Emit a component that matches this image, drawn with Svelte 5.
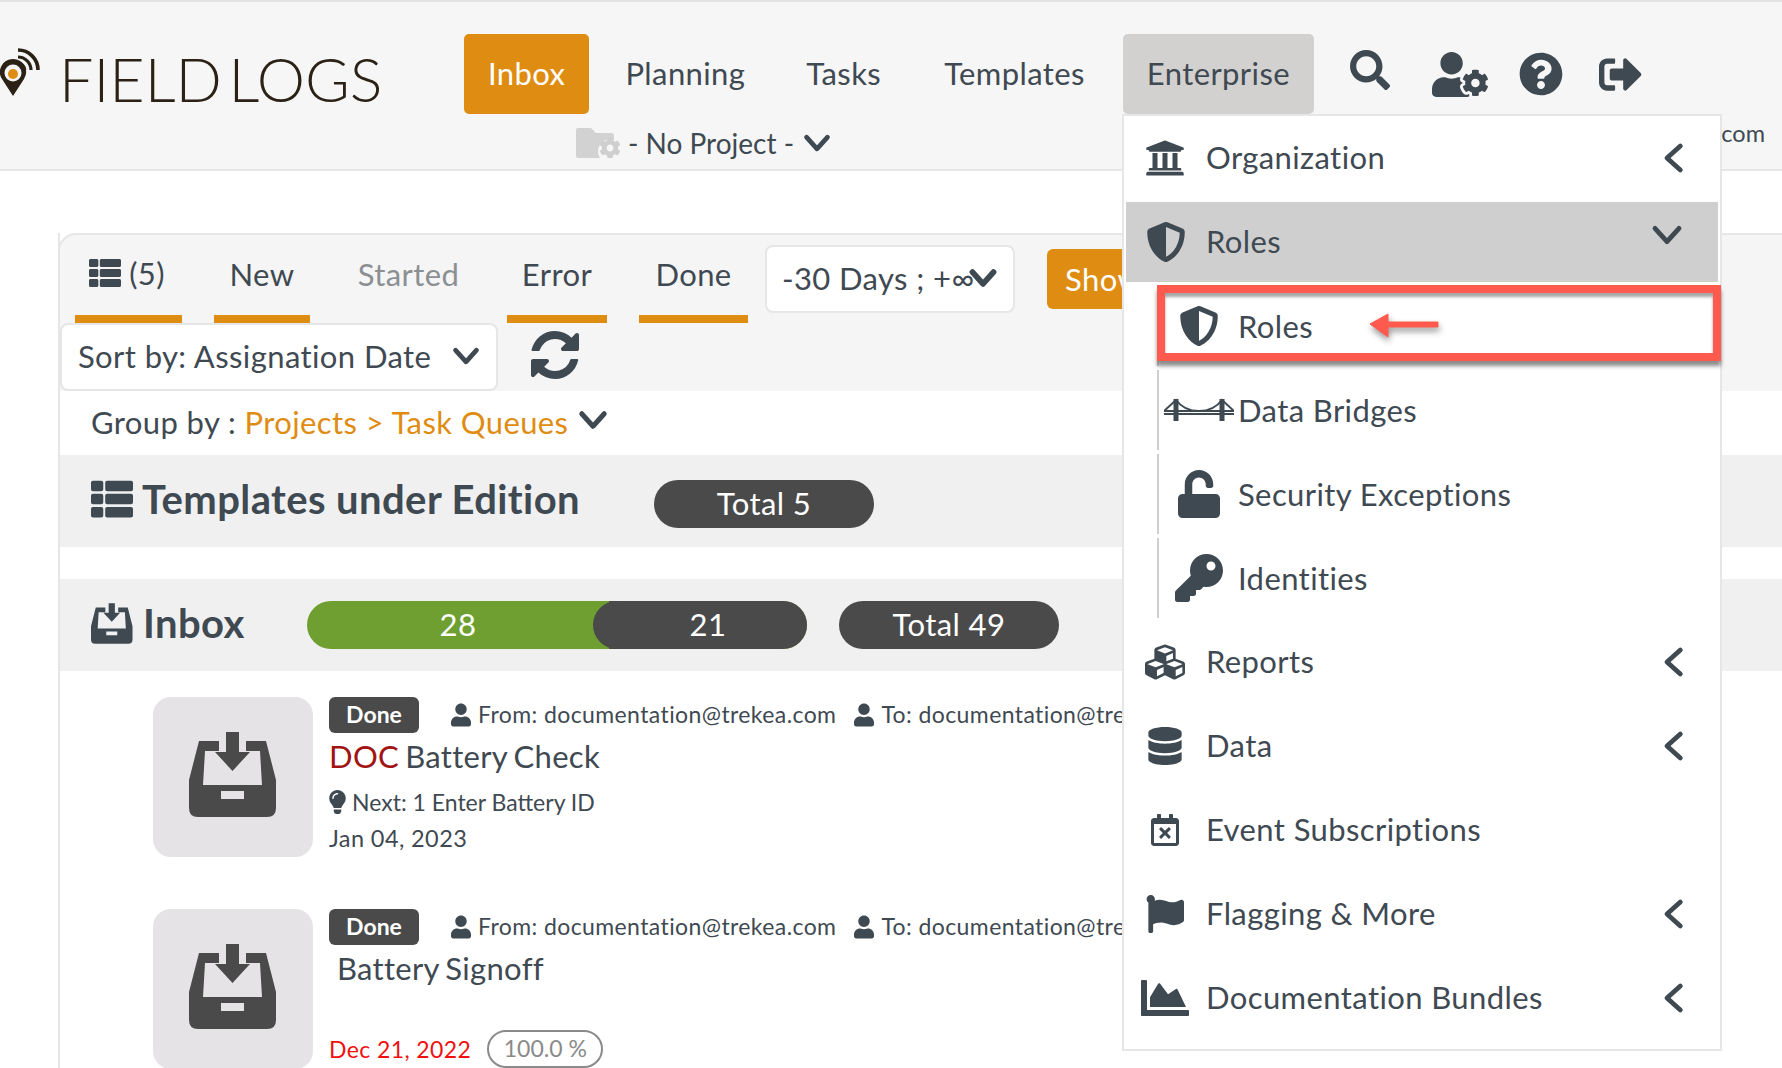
<script>
  const icons = {
    search: ['0 0 512 512', 'M505 442.7L405.3 343c-4.5-4.5-10.6-7-17-7H372c27.6-35.3 44-79.7 44-128C416 93.1 322.9 0 208 0S0 93.1 0 208s93.1 208 208 208c48.3 0 92.7-16.4 128-44v16.3c0 6.4 2.5 12.5 7 17l99.7 99.7c9.4 9.4 24.6 9.4 33.9 0l28.3-28.3c9.4-9.4 9.4-24.6.1-34zM208 336c-70.7 0-128-57.2-128-128 0-70.7 57.2-128 128-128 70.7 0 128 57.2 128 128 0 70.7-57.2 128-128 128z'],
    usercog: ['0 0 640 512', 'M610.5 373.3c2.6-14.1 2.6-28.5 0-42.6l25.8-14.9c3-1.7 4.3-5.2 3.3-8.5-6.7-21.6-18.2-41.2-33.2-57.4-2.3-2.5-6-3.1-9-1.4l-25.8 14.9c-10.9-9.3-23.4-16.5-36.9-21.3v-29.8c0-3.4-2.4-6.4-5.7-7.1-22.3-5-45-4.8-66.2 0-3.3.7-5.7 3.7-5.7 7.1v29.8c-13.5 4.8-26 12-36.9 21.3l-25.8-14.9c-2.9-1.7-6.7-1.1-9 1.4-15 16.2-26.5 35.8-33.2 57.4-1 3.3.4 6.8 3.3 8.5l25.8 14.9c-2.6 14.1-2.6 28.5 0 42.6l-25.8 14.9c-3 1.7-4.3 5.2-3.3 8.5 6.7 21.6 18.2 41.1 33.2 57.4 2.3 2.5 6 3.1 9 1.4l25.8-14.9c10.9 9.3 23.4 16.5 36.9 21.3v29.8c0 3.4 2.4 6.4 5.7 7.1 22.3 5 45 4.8 66.2 0 3.3-.7 5.7-3.7 5.7-7.1v-29.8c13.5-4.8 26-12 36.9-21.3l25.8 14.9c2.9 1.7 6.7 1.1 9-1.4 15-16.2 26.5-35.8 33.2-57.4 1-3.3-.4-6.8-3.3-8.5l-25.8-14.9zM496 400.5c-26.8 0-48.5-21.8-48.5-48.5s21.8-48.5 48.5-48.5 48.5 21.8 48.5 48.5-21.7 48.5-48.5 48.5zM224 256c70.7 0 128-57.3 128-128S294.7 0 224 0 96 57.3 96 128s57.3 128 128 128zm201.2 226.5c-2.3-1.2-4.6-2.6-6.8-3.9l-7.9 4.6c-6 3.4-12.8 5.3-19.6 5.3-10.9 0-21.4-4.6-28.9-12.6-18.3-19.8-32.3-43.9-40.2-69.6-5.5-17.7 1.9-36.4 17.9-45.7l7.9-4.6c-.1-2.6-.1-5.2 0-7.8l-7.9-4.6c-16-9.2-23.4-28-17.9-45.7.9-2.9 2.2-5.8 3.2-8.7-3.8-.3-7.5-1.2-11.4-1.2h-16.7c-22.2 10.2-46.9 16-72.9 16s-50.6-5.8-72.9-16h-16.7C60.2 288 0 348.2 0 422.4V464c0 26.5 21.5 48 48 48h352c10.1 0 19.5-3.2 27.2-8.5-1.2-3.8-2-7.7-2-11.8v-9.2z'],
    help: ['0 0 512 512', 'M504 256c0 136.997-111.043 248-248 248S8 392.997 8 256C8 119.083 119.043 8 256 8s248 111.083 248 248zM262.655 90c-54.497 0-89.255 22.957-116.549 63.758-3.536 5.286-2.353 12.415 2.715 16.258l34.699 26.31c5.205 3.947 12.621 3.008 16.665-2.122 17.864-22.658 30.113-35.797 57.303-35.797 20.429 0 45.698 13.148 45.698 32.958 0 14.976-12.363 22.667-32.534 33.976C247.128 238.528 216 254.941 216 296v4c0 6.627 5.373 12 12 12h56c6.627 0 12-5.373 12-12v-1.333c0-28.462 83.186-29.647 83.186-106.667 0-58.002-60.165-102-116.531-102zM256 338c-25.365 0-46 20.635-46 46 0 25.364 20.635 46 46 46s46-20.636 46-46c0-25.365-20.635-46-46-46z'],
    signout: ['0 0 512 512', 'M497 273L329 441c-15 15-41 4.5-41-17v-96H152c-13.3 0-24-10.7-24-24v-96c0-13.3 10.7-24 24-24h136V88c0-21.4 25.9-32 41-17l168 168c9.3 9.4 9.3 24.6 0 34zM192 436v-40c0-6.6-5.4-12-12-12H96c-17.7 0-32-14.3-32-32V160c0-17.7 14.3-32 32-32h84c6.6 0 12-5.4 12-12V76c0-6.6-5.4-12-12-12H96c-53 0-96 43-96 96v192c0 53 43 96 96 96h84c6.6 0 12-5.4 12-12z'],
    bank: ['0 0 512 512', 'M496 128v16a8 8 0 0 1-8 8h-24v12c0 6.627-5.373 12-12 12H60c-6.627 0-12-5.373-12-12v-12H24a8 8 0 0 1-8-8v-16a8 8 0 0 1 4.941-7.392l232-88a7.996 7.996 0 0 1 6.118 0l232 88A8 8 0 0 1 496 128zm-24 304H40c-13.255 0-24 10.745-24 24v16a8 8 0 0 0 8 8h464a8 8 0 0 0 8-8v-16c0-13.255-10.745-24-24-24zM96 192v192H60c-6.627 0-12 5.373-12 12v20h416v-20c0-6.627-5.373-12-12-12h-36V192h-64v192h-64V192h-64v192h-64V192H96z'],
    shield: ['0 0 512 512', 'M466.5 83.7l-192-80a48.15 48.15 0 0 0-36.9 0l-192 80C27.7 91.1 16 108.6 16 128c0 198.5 114.5 335.7 221.5 380.3 11.8 4.9 25.1 4.9 36.9 0C360.1 472.6 496 349.3 496 128c0-19.4-11.7-36.9-29.5-44.3zM256.1 446.3l-.1-381 175.9 73.3c-3.3 151.4-82.1 261.1-175.8 307.7z'],
    cubes: ['0 0 512 512', 'M488.6 250.2L392 214V105.5c0-15-9.3-28.4-23.4-33.7l-100-37.5c-8.1-3.1-17.1-3.1-25.3 0l-100 37.5c-14.1 5.3-23.4 18.7-23.4 33.7V214l-96.6 36.2C9.3 255.5 0 268.9 0 283.9V394c0 13.6 7.7 26.1 19.9 32.2l100 50c10.1 5.1 22.1 5.1 32.2 0l103.9-52 103.9 52c10.1 5.1 22.1 5.1 32.2 0l100-50c12.2-6.1 19.9-18.6 19.9-32.2V283.9c0-15-9.3-28.4-23.4-33.7zM358 214.8l-85 31.9v-68.2l85-37v73.3zM154 104.1l102-38.2 102 38.2v.6l-102 41.4-102-41.4v-.6zm84 291.1l-85 42.5v-79.1l85-38.8v75.4zm0-112l-102 41.4-102-41.4v-.6l102-38.2 102 38.2v.6zm240 112l-85 42.5v-79.1l85-38.8v75.4zm0-112l-102 41.4-102-41.4v-.6l102-38.2 102 38.2v.6z'],
    database: ['0 0 448 512', 'M448 73.143v45.714C448 159.143 347.667 192 224 192S0 159.143 0 118.857V73.143C0 32.857 100.333 0 224 0s224 32.857 224 73.143zM448 176v102.857C448 319.143 347.667 352 224 352S0 319.143 0 278.857V176c48.125 33.143 136.208 48.572 224 48.572S399.874 209.143 448 176zm0 160v102.857C448 479.143 347.667 512 224 512S0 479.143 0 438.857V336c48.125 33.143 136.208 48.572 224 48.572S399.874 369.143 448 336z'],
    calendar: ['0 0 448 512', 'M311.7 374.7l-17 17c-4.7 4.7-12.3 4.7-17 0L224 337.9l-53.7 53.7c-4.7 4.7-12.3 4.7-17 0l-17-17c-4.7-4.7-4.7-12.3 0-17l53.7-53.7-53.7-53.7c-4.7-4.7-4.7-12.3 0-17l17-17c4.7-4.7 12.3-4.7 17 0l53.7 53.7 53.7-53.7c4.7-4.7 12.3-4.7 17 0l17 17c4.7 4.7 4.7 12.3 0 17L257.9 304l53.7 53.7c4.8 4.7 4.8 12.3.1 17zM448 112v352c0 26.5-21.5 48-48 48H48c-26.5 0-48-21.5-48-48V112c0-26.5 21.5-48 48-48h48V12c0-6.6 5.4-12 12-12h40c6.6 0 12 5.4 12 12v52h128V12c0-6.6 5.4-12 12-12h40c6.6 0 12 5.4 12 12v52h48c26.5 0 48 21.5 48 48zm-48 346V160H48v298c0 3.3 2.7 6 6 6h340c3.3 0 6-2.7 6-6z'],
    flag: ['0 0 512 512', 'M349.565 98.783C295.978 98.783 251.721 64 184.348 64c-24.955 0-47.309 4.384-68.045 12.013a55.947 55.947 0 0 0 3.586-23.562C118.117 24.015 94.806 1.206 66.338.048 34.345-1.254 8 24.296 8 56c0 19.026 9.497 35.825 24 45.945V488c0 13.255 10.745 24 24 24h16c13.255 0 24-10.745 24-24v-94.4c28.311-12.064 63.582-22.122 114.435-22.122 53.588 0 97.844 34.783 165.217 34.783 48.169 0 86.667-16.294 122.505-40.858C506.84 359.452 512 349.571 512 339.045v-243.1c0-23.393-24.269-38.87-45.485-29.016-34.338 15.948-76.454 31.854-116.95 31.854z'],
    chart: ['0 0 512 512', 'M500 384c6.6 0 12 5.4 12 12v40c0 6.6-5.4 12-12 12H12c-6.6 0-12-5.4-12-12V76c0-6.6 5.4-12 12-12h40c6.6 0 12 5.4 12 12v308h436zM372.7 159.5L288 216l-85.3-113.7c-5.1-6.8-15.5-6.3-19.9 1L96 248v104h384l-89.9-187.8c-3.2-6.5-11.4-8.7-17.4-4.7z'],
    unlock: ['0 0 448 512', 'M400 256H152V152.9c0-39.6 31.7-72.5 71.3-72.9 40-.4 72.7 32.1 72.7 72v16c0 13.3 10.7 24 24 24h32c13.3 0 24-10.7 24-24v-16C376 68 307.5-.3 223.5 0 139.5.3 72 69.5 72 153.5V256H48c-26.5 0-48 21.5-48 48v160c0 26.5 21.5 48 48 48h352c26.5 0 48-21.5 48-48V304c0-26.5-21.5-48-48-48z'],
    key: ['0 0 512 512', 'M512 176.001C512 273.203 433.202 352 336 352c-11.22 0-22.19-1.062-32.827-3.069l-24.012 27.014A23.999 23.999 0 0 1 261.223 384H224v40c0 13.255-10.745 24-24 24h-40v40c0 13.255-10.745 24-24 24H24c-13.255 0-24-10.745-24-24v-78.059c0-6.365 2.529-12.47 7.029-16.971l161.802-161.802C163.108 213.814 160 195.271 160 176 160 78.798 238.797.001 335.999 0 433.488-.001 512 78.511 512 176.001zM336 128c0 26.51 21.49 48 48 48s48-21.49 48-48-21.49-48-48-48-48 21.49-48 48z'],
    user: ['0 0 448 512', 'M224 256c70.7 0 128-57.3 128-128S294.7 0 224 0 96 57.3 96 128s57.3 128 128 128zm89.6 32h-16.7c-22.2 10.2-46.9 16-72.9 16s-50.6-5.8-72.9-16h-16.7C60.2 288 0 348.2 0 422.4V464c0 26.5 21.5 48 48 48h352c26.5 0 48-21.5 48-48v-41.6c0-74.2-60.2-134.4-134.4-134.4z'],
    bulb: ['0 0 352 512', 'M96.06 454.35c.01 6.29 1.87 12.45 5.36 17.69l17.09 25.69a31.99 31.99 0 0 0 26.64 14.28h61.71a31.99 31.99 0 0 0 26.64-14.28l17.09-25.69a31.989 31.989 0 0 0 5.36-17.69l.04-38.35H96.01l.05 38.35zM0 176c0 44.37 16.45 84.85 43.56 115.78 16.52 18.85 42.36 58.23 52.21 91.45.04.26.07.52.11.78h160.24c.04-.26.07-.51.11-.78 9.85-33.22 35.69-72.6 52.21-91.45C335.55 260.85 352 220.37 352 176 352 78.61 272.91-.3 175.45 0 73.44.31 0 82.97 0 176zm176-80c-44.11 0-80 35.89-80 80 0 8.84-7.16 16-16 16s-16-7.16-16-16c0-61.76 50.24-112 112-112 8.84 0 16 7.16 16 16s-7.16 16-16 16z'],
    tray: ['0 0 88 85', 'M10 9H30V19H16L14 53H73L71 19H57V9H77L87 48V76Q87 85 78 85H9Q0 85 0 76V48ZM32 59V67H55V59ZM37 0H50V20H61L43.5 39L26 20H37Z'],
    refresh: ['0 0 1792 1792', 'M1639 1056q0 5-1 7-64 268-268 434.5t-478 166.5q-146 0-282.5-55t-243.5-157l-129 129q-19 19-45 19t-45-19-19-45v-448q0-26 19-45t45-19h448q26 0 45 19t19 45-19 45l-137 137q71 66 161 102t187 36q134 0 250-65t186-179q11-17 53-117 8-23 30-23h192q13 0 22.5 9.5t9.5 22.5zm25-800v448q0 26-19 45t-45 19h-448q-26 0-45-19t-19-45 19-45l138-138q-148-137-349-137-134 0-250 65t-186 179q-11 17-53 117-8 23-30 23h-199q-13 0-22.5-9.5t-9.5-22.5v-7q65-268 270-434.5t480-166.5q146 0 284 55.5t245 156.5l130-129q19-19 45-19t45 19 19 45z'],
    list: ['0 0 512 512', 'M149.3 56v80c0 13.3-10.7 24-24 24H24c-13.3 0-24-10.7-24-24V56c0-13.3 10.7-24 24-24h101.3c13.3 0 24 10.7 24 24zm0 160v80c0 13.3-10.7 24-24 24H24c-13.3 0-24-10.7-24-24v-80c0-13.3 10.7-24 24-24h101.3c13.3 0 24 10.7 24 24zm0 160v80c0 13.3-10.7 24-24 24H24c-13.3 0-24-10.7-24-24v-80c0-13.3 10.7-24 24-24h101.3c13.3 0 24 10.7 24 24zM512 56v80c0 13.3-10.7 24-24 24H197.3c-13.3 0-24-10.7-24-24V56c0-13.3 10.7-24 24-24H488c13.3 0 24 10.7 24 24zm0 160v80c0 13.3-10.7 24-24 24H197.3c-13.3 0-24-10.7-24-24v-80c0-13.3 10.7-24 24-24H488c13.3 0 24 10.7 24 24zm0 160v80c0 13.3-10.7 24-24 24H197.3c-13.3 0-24-10.7-24-24v-80c0-13.3 10.7-24 24-24H488c13.3 0 24 10.7 24 24z'],
  };
  const gear = icons.usercog[1].split('M224 256')[0];

  const tabs = [
    { label: 'New', cls: 't-new', bar: true },
    { label: 'Started', cls: 't-started muted', bar: false },
    { label: 'Error', cls: 't-error', bar: true },
    { label: 'Done', cls: 't-done', bar: true },
  ];

  const menuTop = [{ label: 'Organization', icon: 'bank', chev: true }];
  const subs = [
    { label: 'Roles', icon: 'shield' },
    { label: 'Data Bridges', icon: 'bridge' },
    { label: 'Security Exceptions', icon: 'unlock' },
    { label: 'Identities', icon: 'key' },
  ];
  const menuRest = [
    { label: 'Reports', icon: 'cubes', chev: true },
    { label: 'Data', icon: 'database', chev: true },
    { label: 'Event Subscriptions', icon: 'calendar', chev: false },
    { label: 'Flagging & More', icon: 'flag', chev: true },
    { label: 'Documentation Bundles', icon: 'chart', chev: true },
  ];
  const email = 'documentation@trekea.com';
</script>

{#snippet ic(name, cls = '')}
  <svg class="ic ic-{name} {cls}" viewBox={icons[name][0]} aria-hidden="true"><path d={icons[name][1]} /></svg>
{/snippet}

{#snippet chev(dir, cls = '')}
  <svg class="chev {cls}" viewBox="0 0 24 24" aria-hidden="true">
    {#if dir === 'down'}
      <path d="M3 7l9 10 9-10" />
    {:else}
      <path d="M16 3L6 12l10 9" />
    {/if}
  </svg>
{/snippet}

{#snippet menuRow(item)}
  <div class="m-row">
    <span class="m-ico">{@render ic(item.icon)}</span>
    <span>{item.label}</span>
    {#if item.chev}{@render chev('left', 'm-chev')}{/if}
  </div>
{/snippet}

<div class="page">
  <header class="top">
    <div class="nav-row">
      <div class="logo">
        <svg class="pin" viewBox="0 0 40 70" aria-hidden="true">
          <path d="M13 30a13 13 0 0 0-11 20l11 17 11-17a13 13 0 0 0-11-20z" fill="#2b2115" transform="translate(0 -1)"/>
          <circle cx="13" cy="43" r="8.5" fill="#f5f5f5"/>
          <circle cx="13" cy="44" r="5" fill="#df8c13"/>
          <path d="M18 20a20 20 0 0 1 20 20" fill="none" stroke="#2b2115" stroke-width="3.6"/>
          <path d="M18 27a13 13 0 0 1 13 13" fill="none" stroke="#2b2115" stroke-width="3.2"/>
          <path d="M18 33a7 7 0 0 1 7 7" fill="none" stroke="#2b2115" stroke-width="2.6"/>
        </svg>
        <span class="logo-text">FIELD LOGS</span>
      </div>
      <nav class="nav">
        <a class="nav-item active">Inbox</a>
        <a class="nav-item">Planning</a>
        <a class="nav-item">Tasks</a>
        <a class="nav-item tpl-item">Templates</a>
        <a class="nav-item open">Enterprise</a>
      </nav>
      <div class="tools">
        {@render ic('search')}
        {@render ic('usercog')}
        {@render ic('help')}
        {@render ic('signout')}
      </div>
    </div>
    <div class="sub-row">
      <svg class="folder" viewBox="0 0 44 30" aria-hidden="true">
        <path d="M2 0h13l5 5h15q3 0 3 3v4a12 12 0 0 0-15 16l1 2H2q-2 0-2-2V2q0-2 2-2z" fill="#d2d2d2"/>
        <g transform="translate(34 20) scale(.07) translate(-496 -352)"><path d={gear} fill="#cfcfcf"/></g>
      </svg>
      <span>- No Project -</span>
      {@render chev('down', 'prj-chev')}
      <span class="who">{email}</span>
    </div>
  </header>

  <main class="panel">
    <section class="toolbar">
      <div class="tab-row">
        <div class="tab t-all">
          <span class="tab-label">{@render ic('list', 'tab-list')}(5)</span>
          <i class="bar"></i>
        </div>
        {#each tabs as t}
          <div class="tab {t.cls}">
            <span class="tab-label">{t.label}</span>
            {#if t.bar}<i class="bar"></i>{/if}
          </div>
        {/each}
        <div class="select date">
          <span>-30 Days ; +∞</span>
          {@render chev('down', 'date-chev')}
        </div>
        <button class="show">Show</button>
      </div>
      <div class="sort-row">
        <div class="select sort">
          <span>Sort by: Assignation Date</span>
          {@render chev('down', 'sort-chev')}
        </div>
        {@render ic('refresh')}
      </div>
    </section>

    <div class="group">
      Group by : <span class="link">Projects &gt; Task Queues</span>
      {@render chev('down', 'group-chev')}
    </div>

    <div class="band">
      <h2 class="band-title tpl">{@render ic('list', 'band-list')}Templates under Edition</h2>
      <span class="pill total5">Total 5</span>
    </div>

    <div class="band second">
      <h2 class="band-title inb">{@render ic('tray', 'band-tray')}Inbox</h2>
      <div class="progress">
        <span class="seg-green">28</span>
        <span class="seg-dark">21</span>
      </div>
      <span class="pill total49">Total 49</span>
    </div>

    <article class="item">
      <div class="thumb">{@render ic('tray', 'thumb-tray')}</div>
      <div class="info">
        <div class="meta">
          <span class="badge">Done</span>
          <span class="who-line from">{@render ic('user', 'u')}<span class="wt">From: {email}</span></span>
          <span class="who-line">{@render ic('user', 'u')}<span class="wt">To: {email}</span></span>
        </div>
        <div class="title"><span class="doc">DOC</span> Battery Check</div>
        <div class="next">{@render ic('bulb', 'b')}Next: 1 Enter Battery ID</div>
        <div class="date-line">Jan 04, 2023</div>
      </div>
    </article>

    <article class="item lower">
      <div class="thumb">{@render ic('tray', 'thumb-tray')}</div>
      <div class="info">
        <div class="meta">
          <span class="badge">Done</span>
          <span class="who-line from">{@render ic('user', 'u')}<span class="wt">From: {email}</span></span>
          <span class="who-line">{@render ic('user', 'u')}<span class="wt">To: {email}</span></span>
        </div>
        <div class="title indent">Battery Signoff</div>
        <div class="foot">
          <span class="late">Dec 21, 2022</span>
          <span class="pct">100.0 %</span>
        </div>
      </div>
    </article>
  </main>

  <aside class="menu">
    {#each menuTop as m}{@render menuRow(m)}{/each}
    <div class="m-row hi">
      <span class="m-ico">{@render ic('shield')}</span>
      <span>Roles</span>
      {@render chev('down', 'm-down')}
    </div>
    <div class="subs">
      {#each subs as s}
        <div class="s-row">
          <span class="s-ico">
            {#if s.icon === 'bridge'}
              <svg class="bridge" viewBox="0 0 70 24" aria-hidden="true">
                <path d="M0 13H70M0 16H70" stroke="#3f4952" stroke-width="1.8" fill="none"/>
                <path d="M12 1V23M58 1V23" stroke="#3f4952" stroke-width="5" fill="none"/>
                <path d="M0 13L12 2Q20 13 35 13T58 2L70 13" stroke="#3f4952" stroke-width="2" fill="none"/>
              </svg>
            {:else}
              {@render ic(s.icon)}
            {/if}
          </span>
          <span>{s.label}</span>
        </div>
      {/each}
    </div>
    {#each menuRest as m}{@render menuRow(m)}{/each}

    <div class="callout"></div>
    <svg class="arrow" viewBox="0 0 72 34" aria-hidden="true">
      <path d="M70 15H20V7L2 17l18 13v-10h50z" fill="#ff5a4d" stroke="#ff5a4d" stroke-linejoin="round"/>
    </svg>
  </aside>
</div>

<style>
  :global(body) { margin: 0; background: #fff; }
  .page {
    position: relative;
    width: 1782px;
    height: 1068px;
    overflow: hidden;
    font-family: Lato, "Open Sans", sans-serif;
    font-size: 31px;
    letter-spacing: .4px;
    color: #3f4952;
    background: #fff;
  }
  svg { display: block; flex: none; }
  .ic { fill: #3f4952; }
  .chev { fill: none; stroke: #3f4952; stroke-width: 4; stroke-linecap: round; stroke-linejoin: round; }

  /* header */
  .top {
    box-sizing: border-box;
    height: 171px;
    background: #f6f6f6;
    border-top: 2px solid #e2e2e2;
    border-bottom: 2px solid #e6e6e6;
  }
  .nav-row { display: flex; align-items: flex-start; padding-top: 32px; height: 80px; }
  .logo { width: 464px; display: flex; position: relative; flex: none; }
  .pin { position: absolute; left: 0; top: -4px; width: 40px; height: 70px; }
  .logo-text {
    margin: 15px 0 0 59px;
    font-weight: 300;
    font-size: 61px;
    line-height: 60px;
    letter-spacing: 0;
    word-spacing: -10px;
    color: #2b2115;
    white-space: nowrap;
  }
  .nav { display: flex; gap: 11px; }
  .nav-item { padding: 0 25px; height: 80px; line-height: 78px; border-radius: 5px; white-space: nowrap; }
  .nav-item.active { padding: 0 24px; background: #df8c13; color: #fff; }
  .nav-item.tpl-item { margin-left: 2px; }
  .nav-item.open { margin-left: 2px; padding: 0 24px; background: #d2d1cf; }
  .tools { display: flex; align-items: center; height: 80px; margin-left: 36px; }
  .ic-search { width: 40px; height: 40px; margin-top: -8px; }
  .ic-usercog { width: 56px; height: 45px; margin-left: 42px; }
  .ic-help { width: 44px; height: 44px; margin-left: 31px; }
  .ic-signout { width: 43px; height: 43px; margin-left: 36px; }
  .sub-row { display: flex; align-items: center; height: 58px; padding-left: 576px; font-size: 28px; letter-spacing: 0; position: relative; }
  .folder { width: 44px; height: 30px; margin-right: 8px; }
  .prj-chev { width: 28px; height: 28px; margin-left: 9px; stroke-width: 4; }
  .who { margin-left: auto; margin-right: 17px; margin-top: -20px; font-size: 23.5px; }

  /* panel */
  .panel { margin: 62px 0 0 58px; border-left: 2px solid #e6e6e6; }
  .toolbar {
    box-sizing: border-box;
    height: 158px;
    margin-left: -2px;
    background: #f5f5f5;
    border-top: 2px solid #e6e6e6;
    border-left: 2px solid #e6e6e6;
    border-top-left-radius: 18px;
  }
  .tab-row { display: flex; height: 88px; padding-left: 15px; gap: 32px; align-items: flex-start; }
  .tab { position: relative; height: 88px; text-align: center; line-height: 78px; color: #3f4952; white-space: nowrap; }
  .tab-label { display: inline-flex; align-items: center; gap: 8px; height: 76px; }
  .bar { position: absolute; left: 0; right: 0; bottom: 0; height: 8px; background: #df8c13; }
  .t-all { width: 107px; }
  .t-new { width: 96px; }
  .t-started { width: 133px; }
  .t-error { width: 100px; }
  .t-done { width: 109px; }
  .muted { color: #8b8f92; }
  .tab-list { width: 32px; height: 32px; margin-left: -3px; }
  .select {
    box-sizing: border-box;
    display: flex;
    align-items: center;
    background: #fff;
    border: 2px solid #e6e6e6;
    border-radius: 8px;
    padding-bottom: 2px;
    white-space: nowrap;
  }
  .date { width: 250px; height: 68px; margin: 10px 0 0 -15px; padding: 0 16px 2px 15px; justify-content: space-between; }
  .date span { margin-right: -10px; }
  .date-chev { width: 28px; height: 28px; stroke-width: 5; }
  .show {
    flex: none;
    height: 60px;
    width: 140px;
    margin: 14px 0 0 0;
    border: 0;
    border-radius: 6px;
    background: #df8c13;
    color: #fff;
    font: inherit;
    letter-spacing: inherit;
    text-align: left;
    padding: 0 0 0 18px;
  }
  .sort-row { display: flex; align-items: center; height: 68px; gap: 29px; }
  .sort { width: 438px; height: 68px; padding: 0 16px 2px 16px; justify-content: space-between; }
  .sort-chev { width: 28px; height: 28px; stroke-width: 4; }
  .ic-refresh { width: 56px; height: 56px; margin-top: -4px; }

  .group { box-sizing: border-box; display: flex; align-items: center; height: 64px; padding: 0 0 2px 31px; white-space: pre; }
  .link { color: #df8c13; }
  .group-chev { width: 30px; height: 30px; margin: -4px 0 0 10px; stroke-width: 4; }

  .band { display: flex; align-items: center; height: 92px; background: #f0f0f0; padding-left: 31px; }
  .band.second { margin-top: 32px; }
  .band-title { box-sizing: border-box; display: flex; align-items: center; margin: 0; font-size: 40px; font-weight: 700; white-space: pre; flex: none; }
  .tpl { width: 563px; margin-top: -4px; }
  .inb { width: 216px; margin-top: -4px; }
  .band-list { width: 42px; height: 42px; margin-right: 9px; }
  .band-tray { width: 42px; height: 41px; margin-right: 10px; }
  .pill {
    box-sizing: border-box;
    display: inline-flex;
    align-items: center;
    justify-content: center;
    width: 220px;
    height: 48px;
    padding-bottom: 2px;
    border-radius: 24px;
    background: #4a4a4a;
    color: #fff;
  }
  .total5 { margin-top: 6px; }
  .progress { display: flex; width: 500px; height: 48px; border-radius: 24px; background: #6e9f30; color: #fff; line-height: 46px; text-align: center; }
  .seg-green { width: 302px; }
  .seg-dark { position: relative; width: 198px; background: #4a4a4a; border-radius: 0 24px 24px 0; }
  .seg-dark::before { content: ''; position: absolute; z-index: 0; left: -16px; top: 0; width: 48px; height: 48px; border-radius: 24px 0 0 24px; background: #4a4a4a; }
  .total49 { margin-left: 32px; }

  .item { display: flex; margin: 26px 0 0 93px; gap: 16px; }
  .item.lower { margin-top: 52px; }
  .thumb { flex: none; display: flex; align-items: center; justify-content: center; width: 160px; height: 160px; border-radius: 18px; background: #e5e3e5; }
  .thumb-tray { width: 88px; height: 85px; fill: #4a4a4a; margin: -5px 0 0 -1px; }
  .info { flex: 1; min-width: 0; }
  .meta { display: flex; align-items: center; height: 36px; font-size: 23px; white-space: pre; }
  .badge { width: 90px; height: 36px; line-height: 34px; text-align: center; border-radius: 6px; background: #4a4a4a; color: #fff; font-weight: 700; letter-spacing: 0; }
  .who-line { display: inline-flex; align-items: center; gap: 7px; margin-left: 18px; }
  .who-line.from { margin-left: 32px; }
  .wt { margin-top: -3px; }
  .u { width: 20px; height: 24px; }
  .title { height: 48px; line-height: 46px; word-spacing: -2px; letter-spacing: .3px; }
  .indent { padding-left: 8px; }
  .doc { color: #a21313; }
  .next { box-sizing: border-box; display: flex; align-items: center; gap: 6px; height: 44px; padding-bottom: 2px; font-size: 23px; letter-spacing: 0; }
  .b { width: 17px; height: 24px; }
  .date-line { font-size: 23.5px; height: 28px; line-height: 26px; }
  .foot { display: flex; align-items: center; gap: 16px; margin-top: 37px; font-size: 23px; }
  .late { color: #f01010; }
  .pct { box-sizing: border-box; width: 116px; height: 38px; line-height: 33px; text-align: center; border: 2px solid #8a8a8a; border-radius: 19px; color: #8a8a8a; letter-spacing: 0; }

  /* dropdown */
  .menu {
    position: absolute;
    left: 1122px;
    top: 114px;
    box-sizing: border-box;
    width: 600px;
    height: 937px;
    background: #fff;
    border: 2px solid #e6e6e6;
    white-space: nowrap;
  }
  .m-row { position: relative; box-sizing: border-box; display: flex; align-items: center; height: 84px; padding-bottom: 2px; }
  .m-ico { flex: none; display: flex; justify-content: center; width: 82px; margin-top: 2px; }
  .hi { height: 80px; margin: 2px; background: #cfcfcf; }
  .hi .m-ico { width: 80px; }
  .m-chev { position: absolute; left: 535px; top: 26px; width: 32px; height: 32px; stroke-width: 3.6; }
  .m-down { position: absolute; left: 525px; top: 17px; width: 32px; height: 32px; stroke-width: 3.6; }
  .subs { display: flex; flex-direction: column; gap: 4px; padding: 2px 0; margin-left: 33px; }
  .s-row { box-sizing: border-box; display: flex; align-items: center; height: 80px; padding-bottom: 1px; border-left: 2px solid #cfcfcf; }
  .s-ico { flex: none; display: flex; justify-content: center; width: 79px; margin-top: 1px; }
  .bridge { width: 70px; height: 24px; }
  .ic-bank { width: 40px; height: 40px; }
  .ic-shield { width: 40px; height: 40px; }
  .ic-cubes { width: 40px; height: 40px; }
  .ic-database { width: 34px; height: 38px; }
  .ic-calendar { width: 28px; height: 32px; }
  .ic-flag { width: 38px; height: 38px; }
  .ic-chart { width: 48px; height: 48px; }
  .ic-unlock { width: 42px; height: 48px; }
  .ic-key { width: 48px; height: 48px; }
  .callout {
    position: absolute;
    left: 33px;
    top: 169px;
    box-sizing: border-box;
    width: 564px;
    height: 76px;
    border: 8px solid #ff5a4d;
    box-shadow: 0 5px 4px rgba(0, 0, 0, .45), inset 0 4px 3px rgba(0, 0, 0, .35);
  }
  .arrow {
    position: absolute;
    left: 244px;
    top: 191px;
    width: 72px;
    height: 34px;
    filter: drop-shadow(1px 4px 3px rgba(0, 0, 0, .4));
  }
</style>
